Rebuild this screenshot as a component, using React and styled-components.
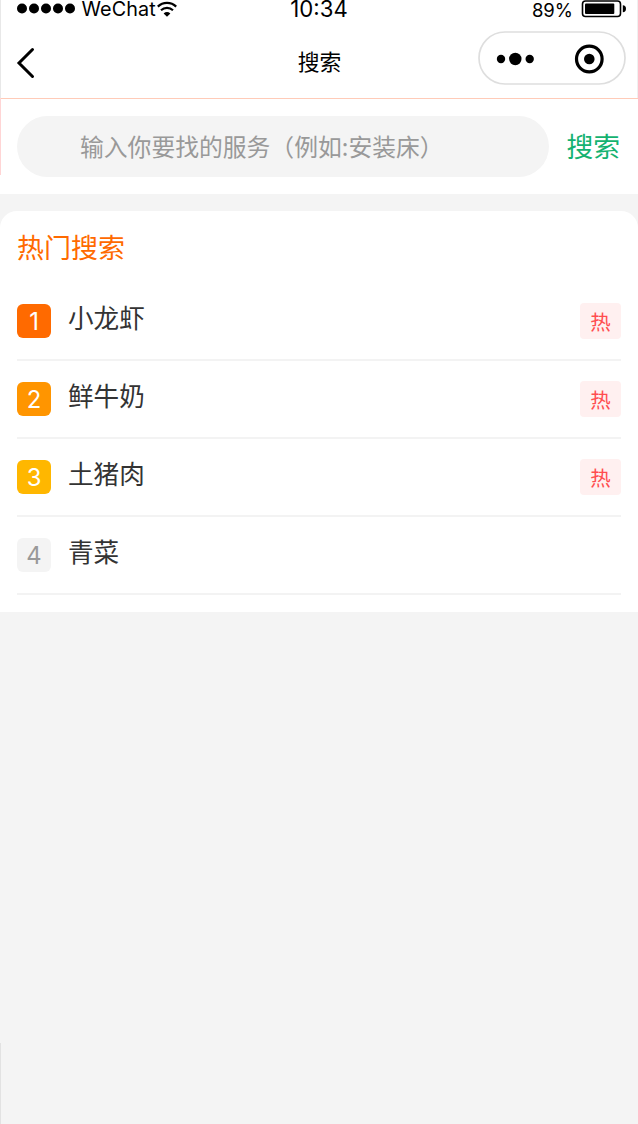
import React from 'react'
import styled, { createGlobalStyle } from 'styled-components'

const GlobalStyle = createGlobalStyle`
    body {
        margin: 0;
        background: #f4f4f4;
        font-family: 'Noto Sans CJK SC', sans-serif;
    }

    * {
        box-sizing: border-box;
    }
`;

const Page = styled.div`
    position: relative;
    width: 638px;
    height: 1124px;
    overflow: hidden;
    background: #f4f4f4;
`;

const EdgeLine = styled.div`
    position: absolute;
    left: ${props => props.$right ? '637px' : '0'};
    top: ${props => props.$top}px;
    width: 1px;
    height: ${props => props.$height}px;
    background: ${props => props.$color};
`;

const Header = styled.header`
    height: 99px;
    background: #ffffff;
    border-bottom: 1px solid #ffcbb8;
`;

const StatusBar = styled.div`
    display: grid;
    grid-template-columns: 272px 60px 1fr;
    height: 20px;
    padding: 0 12px 0 17px;
    color: #000000;
    font-family: Inter, sans-serif;
`;

const Carrier = styled.div`
    display: flex;
    font-size: 19.8px;
    line-height: 18px;
    white-space: nowrap;
`;

const SignalIcon = styled.svg`
    flex: none;
    width: 60px;
    height: 18px;
    margin-right: 4.5px;
`;

const CarrierName = styled.span`
    width: 75.5px;
    letter-spacing: 0.1px;
`;

const WifiIcon = styled.svg`
    flex: none;
    width: 20px;
    height: 18px;
`;

const Time = styled.div`
    font-size: 22.2px;
    line-height: 17px;
    text-align: center;
    white-space: nowrap;
`;

const Battery = styled.div`
    display: flex;
    justify-content: flex-end;
    font-size: 18.5px;
    line-height: 21px;
`;

const BatteryIcon = styled.svg`
    width: 45px;
    height: 20px;
    margin-left: 8px;
`;

const NavBar = styled.div`
    display: grid;
    grid-template-columns: 148px 1fr 148px;
    align-items: center;
    height: 76px;
    padding: 0 12px 0 13px;
`;

const BackIcon = styled.svg`
    width: 28px;
    height: 36px;
    margin-top: 9px;
`;

const Title = styled.h1`
    margin: 5px 0 0;
    color: #000000;
    font-size: 21.8px;
    font-weight: 400;
    line-height: 32px;
    text-align: center;
`;

const Capsule = styled.svg`
    width: 148px;
    height: 54px;
`;

const SearchBar = styled.div`
    display: flex;
    align-items: center;
    height: 95px;
    padding: 0 17px;
    background: #ffffff;
`;

const SearchInput = styled.div`
    width: 532px;
    height: 61px;
    padding-left: 63px;
    border-radius: 31px;
    background: #f4f4f4;
    color: #999999;
    font-size: 23.8px;
    line-height: 59px;
    white-space: nowrap;
`;

const SearchButton = styled.div`
    height: 61px;
    margin-left: 17.5px;
    color: #14b270;
    font-size: 26.8px;
    line-height: 60px;
    white-space: nowrap;
`;

const Card = styled.section`
    height: 401px;
    margin-top: 17px;
    padding: 17px 17px 0;
    border-radius: 17px 17px 0 0;
    background: #ffffff;
`;

const Heading = styled.h2`
    height: 38px;
    margin: 0;
    color: #ff6a00;
    font-size: 27px;
    font-weight: 400;
    line-height: 37px;
`;

const List = styled.ul`
    margin: 17px 0 0;
    padding: 0;
    list-style: none;
`;

const Row = styled.li`
    display: flex;
    align-items: center;
    height: 78.1px;
    border-bottom: 2px solid #f3f3f3;
`;

const Rank = styled.span`
    width: 34px;
    height: 34px;
    border-radius: 6px;
    background: ${props => props.$background};
    color: ${props => props.$color || '#ffffff'};
    font-family: Inter, sans-serif;
    font-size: 23.8px;
    line-height: 36px;
    text-align: center;
`;

const Name = styled.span`
    flex: 1;
    margin: 0 0 8px 17px;
    color: #333333;
    font-size: 25.6px;
    line-height: 36px;
`;

const Tag = styled.span`
    width: 41px;
    height: 36px;
    border-radius: 4px;
    background: #fff0f0;
    color: #ff4d4f;
    font-size: 20.5px;
    line-height: 36px;
    text-align: center;
`;

const items = [
  { name: '小龙虾', background: '#ff6a00', hot: true },
  { name: '鲜牛奶', background: '#ff9500', hot: true },
  { name: '土猪肉', background: '#ffb700', hot: true },
  { name: '青菜', background: '#f4f4f4', color: '#999999' }
];

const HotItem = ({ rank, item }) => (
  <Row>
    <Rank $background={item.background} $color={item.color}>{rank}</Rank>
    <Name>{item.name}</Name>
    {item.hot && <Tag>热</Tag>}
  </Row>
);

const App = () => (
  <Page>
    <GlobalStyle />
    <Header>
      <StatusBar>
        <Carrier>
          <SignalIcon viewBox="0 0 60 18">
            {[5, 17, 29, 41, 53].map(x => <circle key={x} cx={x} cy="8.5" r="5" />)}
          </SignalIcon>
          <CarrierName>WeChat</CarrierName>
          <WifiIcon viewBox="0 0 20 18" fill="none" stroke="#000" strokeWidth="2.2">
            <path d="M.8 6.6C6 1.6 14 1.6 19.2 6.6" />
            <path d="M4 10.2C7.4 7 12.6 7 16 10.2" />
            <path d="M6.6 13.4Q10 10.6 13.4 13.4L10 16.8Z" fill="#000" stroke="none" />
          </WifiIcon>
        </Carrier>
        <Time>10:34</Time>
        <Battery>
          <span>89%</span>
          <BatteryIcon viewBox="0 0 45 20">
            <rect x="1.5" y="1" width="38" height="15.5" rx="3" fill="none" stroke="#000" strokeWidth="1.6" />
            <rect x="4" y="3.5" width="29.3" height="10.5" rx="1" />
            <path d="M41.8 5.2Q45 5.5 45 8.7Q45 12 41.8 12.3Z" />
          </BatteryIcon>
        </Battery>
      </StatusBar>
      <NavBar>
        <BackIcon viewBox="0 0 28 36" fill="none" stroke="#000" strokeWidth="3" strokeLinecap="round">
          <path d="M19.5 4.5L6 18L19.5 31.5" />
        </BackIcon>
        <Title>搜索</Title>
        <Capsule viewBox="0 0 148 54">
          <rect x="1" y="1" width="146" height="52" rx="26" fill="#fff" stroke="#dedede" strokeWidth="1.7" />
          <circle cx="23" cy="28" r="4.2" />
          <circle cx="37.3" cy="28" r="6.2" />
          <circle cx="51.7" cy="28" r="4.2" />
          <circle cx="111.3" cy="28" r="12.8" fill="none" stroke="#000" strokeWidth="3.2" />
          <circle cx="111.3" cy="28" r="5.3" />
        </Capsule>
      </NavBar>
    </Header>
    <SearchBar>
      <SearchInput>输入你要找的服务（例如:安装床）</SearchInput>
      <SearchButton>搜索</SearchButton>
    </SearchBar>
    <Card>
      <Heading>热门搜索</Heading>
      <List>
        {items.map((item, index) => <HotItem key={item.name} rank={index + 1} item={item} />)}
      </List>
    </Card>
    <EdgeLine $top={0} $height={98} $color="#e8e8e8" />
    <EdgeLine $top={98} $height={77} $color="#ffd5d5" />
    <EdgeLine $top={1043} $height={81} $color="#e2e2e2" />
    <EdgeLine $right $top={0} $height={98} $color="#f0f0f0" />
  </Page>
);

export default App
